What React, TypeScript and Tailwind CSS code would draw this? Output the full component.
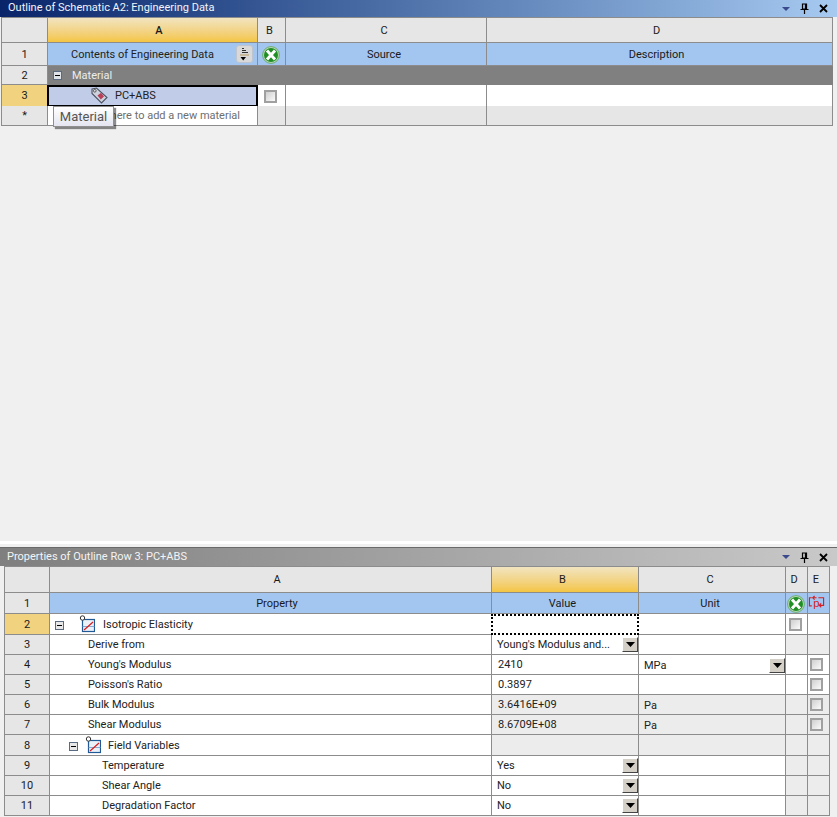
import React from "react";

const line = "border-r border-b border-[#8c8c8c]";

function Cell({ children, className = "" }: { children?: React.ReactNode; className?: string }) {
  return <div className={`flex items-center min-w-0 whitespace-nowrap overflow-hidden pt-[2px] ${line} ${className}`}>{children}</div>;
}

function Head({ children, className = "" }: { children?: React.ReactNode; className?: string }) {
  return <Cell className={`justify-center text-[#1a1a1a] ${className}`}>{children}</Cell>;
}

function Green() {
  return (
    <svg width="18" height="18" viewBox="0 0 18 18">
      <circle cx="9" cy="9" r="8.4" fill="#bcd8bc" stroke="#5aa55a" strokeWidth="0.8" />
      <circle cx="9" cy="9" r="7" fill="#1f8f24" />
      <path d="M5 4.6 L13 13.4 M13 4.6 L5 13.4" stroke="#fff" strokeWidth="3" />
    </svg>
  );
}

function Check({ className = "" }: { className?: string }) {
  return (
    <div className={`w-[13px] h-[13px] border-2 border-[#a0a0a0] bg-gradient-to-br from-[#cfcfcf] to-[#fbfbfb] ${className}`} />
  );
}

function Drop({ className = "" }: { className?: string }) {
  return (
    <div className={`w-[16px] h-[15px] shrink-0 -mt-[2px] flex items-center justify-center bg-[#d4d0c8] border-t border-l border-t-white border-l-white border-r border-b border-r-[#444] border-b-[#444] ${className}`}>
      <svg width="9" height="5" viewBox="0 0 9 5"><path d="M0 0H9L4.5 5Z" fill="#000" /></svg>
    </div>
  );
}

function Minus({ light = false }: { light?: boolean }) {
  return (
    <div className={`w-[9px] h-[9px] shrink-0 flex items-center justify-center border border-[#5a6a80] ${light ? "bg-[#e8e8e8]" : "bg-[#dfe3e8]"}`}>
      <div className="w-[5px] h-px bg-black" />
    </div>
  );
}

function Curve() {
  return (
    <svg width="16" height="18" viewBox="0 0 16 18" className="shrink-0 -mt-[2px]">
      <rect x="3.5" y="4.5" width="12" height="12" fill="#eaf1f9" stroke="#1f5a96" strokeWidth="1.2" />
      <path d="M3.5 11.5 H15.5" stroke="#6f97c4" strokeWidth="0.8" />
      <path d="M5 15 L9 11.5 L14 7" fill="none" stroke="#d81e1e" strokeWidth="1.2" />
      <circle cx="3.5" cy="3" r="2.2" fill="#fff" stroke="#333" strokeWidth="1" />
    </svg>
  );
}

function Tag() {
  return (
    <svg width="17" height="17" viewBox="0 0 17 17" className="shrink-0">
      <path d="M1 2 L5.5 1 L16 10.5 L10.5 16 L1 6.5 Z" fill="#ccd2de" stroke="#4c5360" strokeWidth="1.1" />
      <circle cx="3.8" cy="3.8" r="1.3" fill="#f4f4f4" stroke="#333" strokeWidth="0.8" />
      <path d="M6.5 8.5 L10 5.8 L13 9.5 L9.8 12.5 Z" fill="#b8405a" />
    </svg>
  );
}

function SortBtn() {
  return (
    <div className="w-[17px] h-[18px] -mt-[2px] rounded-[3px] bg-[#d9d9d9] border border-[#bfc5cf] flex items-center justify-center shrink-0">
      <svg width="11" height="13" viewBox="0 0 11 13">
        <path d="M3 0.5H5M3 2.5H7M3 4.5H9" stroke="#333" strokeWidth="1" />
        <path d="M1 7H10" stroke="#b89a60" strokeWidth="1" />
        <path d="M1.5 9H7L4.2 12.5Z" fill="#000" />
      </svg>
    </div>
  );
}

function PIcon() {
  return (
    <svg width="18" height="16" viewBox="0 0 18 16" className="-mt-[2px]">
      <path d="M4 2.5H1.5V11H4" fill="none" stroke="#d32222" strokeWidth="1.2" />
      <path d="M9 2.5H5M7 0.6L5 2.5L7 4.4" fill="none" stroke="#d32222" strokeWidth="1.2" />
      <path d="M11 2.5H16.5V10.5H12M14 8.5L12 10.5L14 12.5" fill="none" stroke="#d32222" strokeWidth="1.2" />
      <text x="5.5" y="12" fontSize="12" fill="#d32222" fontFamily="'Liberation Sans', sans-serif">p</text>
    </svg>
  );
}

function WinButtons() {
  return (
    <div className="flex items-center gap-[10px] pr-[9px]">
      <svg width="8" height="4" viewBox="0 0 8 4"><path d="M0 0H8L4 4Z" fill="#3b4a8c" /></svg>
      <svg width="9" height="11" viewBox="0 0 9 11"><path d="M2.5 1H6.5V6H2.5ZM0.5 6.5H8.5M4.5 7V11M5.5 1V6" fill="none" stroke="#000" strokeWidth="1.2" /></svg>
      <svg width="9" height="9" viewBox="0 0 9 9"><path d="M1 1L8 8M8 1L1 8" stroke="#000" strokeWidth="1.8" /></svg>
    </div>
  );
}

const topCols = "grid grid-cols-[46px_210px_28px_201px_346px]";
const botCols = "grid grid-cols-[45px_442px_147px_147px_22px_22px]";
const grayCell = "bg-[#e6e6e6]";
const lightGray = "bg-[#ececec]";

type BotRow = {
  n: string;
  h: string;
  a: React.ReactNode;
  b: React.ReactNode;
  bGray?: boolean;
  c?: React.ReactNode;
  cGray?: boolean;
  d?: React.ReactNode;
  dGray?: boolean;
  e?: React.ReactNode;
  eGray?: boolean;
};

const bp = "pl-[6px] pb-[1px]";
const upCheck = <Check className="-mt-[2px]" />;

const botRows: BotRow[] = [
  {
    n: "3", h: "h-[20px]", a: <span className="pl-[38px]">Derive from</span>,
    b: <div className="flex w-full items-center justify-between pl-[5px]"><span>Young's Modulus and...</span><Drop /></div>,
    dGray: true, eGray: true,
  },
  {
    n: "4", h: "h-[20px]", a: <span className="pl-[38px]">Young's Modulus</span>,
    b: <span className={bp}>2410</span>,
    c: <div className="flex w-full items-center justify-between pl-[5px] pt-[1px]"><span>MPa</span><Drop /></div>,
    e: upCheck,
  },
  {
    n: "5", h: "h-[20px]", a: <span className="pl-[38px]">Poisson's Ratio</span>,
    b: <span className={bp}>0.3897</span>, e: upCheck,
  },
  {
    n: "6", h: "h-[20px]", a: <span className="pl-[38px]">Bulk Modulus</span>,
    b: <span className={bp}>3.6416E+09</span>, bGray: true,
    c: <span className="pl-[5px] pt-[1px]">Pa</span>, cGray: true, dGray: true, e: upCheck, eGray: true,
  },
  {
    n: "7", h: "h-[20px]", a: <span className="pl-[38px]">Shear Modulus</span>,
    b: <span className={bp}>8.6709E+08</span>, bGray: true,
    c: <span className="pl-[5px] pt-[1px]">Pa</span>, cGray: true, dGray: true, e: upCheck, eGray: true,
  },
  {
    n: "8", h: "h-[21px]",
    a: <div className="flex items-center pl-[19px]"><Minus light /><span className="w-[7px]" /><Curve /><span className="pl-[7px]">Field Variables</span></div>,
    bGray: true, b: null, cGray: true, dGray: true, eGray: true,
  },
  {
    n: "9", h: "h-[20px]", a: <span className="pl-[52px]">Temperature</span>,
    b: <div className="flex w-full items-center justify-between pl-[5px]"><span>Yes</span><Drop /></div>,
    dGray: true, eGray: true,
  },
  {
    n: "10", h: "h-[20px]", a: <span className="pl-[52px]">Shear Angle</span>,
    b: <div className="flex w-full items-center justify-between pl-[5px]"><span>No</span><Drop /></div>,
    dGray: true, eGray: true,
  },
  {
    n: "11", h: "h-[20px]", a: <span className="pl-[52px]">Degradation Factor</span>,
    b: <div className="flex w-full items-center justify-between pl-[5px]"><span>No</span><Drop /></div>,
    dGray: true, eGray: true,
  },
];

export default function App() {
  return (
    <div className="w-[837px] h-[817px] overflow-hidden bg-[#f0f0f0] flex flex-col text-[11px] text-[#222] font-['Roboto','Noto_Sans',sans-serif]">
      {/* Upper panel */}
      <div className="h-[17px] shrink-0 flex items-center justify-between bg-gradient-to-r from-[#0a246a] to-[#a6caf0] border-l border-[#0a246a]">
        <span className="pl-[7px] text-[#f2f4fa]">Outline of Schematic A2: Engineering Data</span>
        <WinButtons />
      </div>
      <div className="flex-1 min-h-0 flex flex-col pl-[1px]">
        <div className="w-[832px] border-l border-t border-[#8c8c8c]">
          <div className={`${topCols} h-[25px]`}>
            <Head className={grayCell} />
            <Head className="bg-gradient-to-b from-[#f1e4bf] to-[#f4c541] font-medium pl-[13px]">A</Head>
            <Head className={`${grayCell} pr-[4px]`}>B</Head>
            <Head className={`${grayCell} pr-[4px]`}>C</Head>
            <Head className={`${grayCell} pr-[6px]`}>D</Head>
          </div>
          <div className={`${topCols} h-[23px]`}>
            <Head className={grayCell}>1</Head>
            <Cell className="bg-[#a3c6f0] pl-[23px] pr-[4px] justify-between">
              <span>Contents of Engineering Data</span>
              <SortBtn />
            </Cell>
            <Head className="bg-[#a3c6f0] pr-[2px]"><Green /></Head>
            <Head className="bg-[#a3c6f0] pr-[4px]">Source</Head>
            <Head className="bg-[#a3c6f0] pr-[6px]">Description</Head>
          </div>
          <div className="grid grid-cols-[46px_785px] h-[19px]">
            <Head className={grayCell}>2</Head>
            <div className="flex items-center bg-[#808080] text-[#ededed] pl-[5px]">
              <Minus />
              <span className="pl-[10px] pt-[1px]">Material</span>
            </div>
          </div>
          <div className={`${topCols} h-[21px]`}>
            <Head className="bg-[#f0d27f]">3</Head>
            <div className="flex items-center bg-[#c1cde8] border-2 border-black -ml-px pl-[42px] w-[211px] min-w-0 whitespace-nowrap">
              <Tag />
              <span className="pl-[7px] pt-[1px]">PC+ABS</span>
            </div>
            <Head className="bg-white pr-[2px]"><Check /></Head>
            <Head className="bg-white" />
            <Head className="bg-white" />
          </div>
          <div className={`${topCols} h-[20px] relative`}>
            <Head className={grayCell}>*</Head>
            <Cell className="bg-white text-[#6e6e6e] pl-[36px]">Click here to add a new material</Cell>
            <Head className={grayCell} />
            <Head className={grayCell} />
            <Head className={grayCell} />
            <div className="absolute left-[51px] top-0 w-[61px] h-[21px] flex items-center justify-center bg-gradient-to-b from-white to-[#e4e5f0] border border-[#8f8f8f] shadow-[2px_2px_1px_rgba(0,0,0,0.45)] text-[13px] text-[#555]">
              Material
            </div>
          </div>
        </div>
      </div>
      <div className="h-[6px] shrink-0 flex flex-col">
        <div className="h-[3px] bg-white" />
      </div>

      {/* Lower panel */}
      <div className="h-[19px] shrink-0 flex items-center justify-between bg-gradient-to-r from-[#7f7f7f] to-[#c9c9c9] border-t border-[#6a6a6a]">
        <span className="pl-[7px] text-[#f4f4f4]">Properties of Outline Row 3: PC+ABS</span>
        <WinButtons />
      </div>
      <div className="h-[251px] shrink-0 pl-[4px] bg-[#f0f0f0]">
        <div className="w-[826px] border-l border-t border-[#8c8c8c]">
          <div className={`${botCols} h-[26px]`}>
            <Head className={grayCell} />
            <Head className={`${grayCell} pl-[13px]`}>A</Head>
            <Head className="bg-gradient-to-b from-[#f1e4bf] to-[#f4c541] pr-[5px]">B</Head>
            <Head className={`${grayCell} pr-[4px]`}>C</Head>
            <Head className={`${grayCell} pr-[5px]`}>D</Head>
            <Head className={`${grayCell} pr-[5px]`}>E</Head>
          </div>
          <div className={`${botCols} h-[21px]`}>
            <Head className={grayCell}>1</Head>
            <Head className="bg-[#a3c6f0] pl-[13px]">Property</Head>
            <Head className="bg-[#a3c6f0] pr-[5px]">Value</Head>
            <Head className="bg-[#a3c6f0] pr-[4px]">Unit</Head>
            <Head className="bg-[#a3c6f0] pr-[2px]"><Green /></Head>
            <Head className="bg-[#a3c6f0] pr-[4px]"><PIcon /></Head>
          </div>
          <div className={`${botCols} h-[21px]`}>
            <Head className="bg-[#f0d27f]">2</Head>
            <Cell className="bg-white pl-[5px]">
              <Minus light />
              <span className="w-[15px]" />
              <Curve />
              <span className="pl-[8px]">Isotropic Elasticity</span>
            </Cell>
            <div className="bg-white border-2 border-dotted border-black -ml-px" />
            <Cell className="bg-white" />
            <Head className="bg-white pr-[2px]">{upCheck}</Head>
            <Cell className="bg-white" />
          </div>
          {botRows.map((r) => (
            <div key={r.n} className={`${botCols} ${r.h}`}>
              <Head className={grayCell}>{r.n}</Head>
              <Cell className="bg-white">{r.a}</Cell>
              <Cell className={r.bGray ? lightGray : "bg-white"}>{r.b}</Cell>
              <Cell className={r.cGray ? lightGray : "bg-white"}>{r.c}</Cell>
              <Head className={`${r.dGray ? lightGray : "bg-white"} pr-[2px]`}>{r.d}</Head>
              <Head className={`${r.eGray ? lightGray : "bg-white"} pr-[4px]`}>{r.e}</Head>
            </div>
          ))}
        </div>
      </div>
    </div>
  );
}
